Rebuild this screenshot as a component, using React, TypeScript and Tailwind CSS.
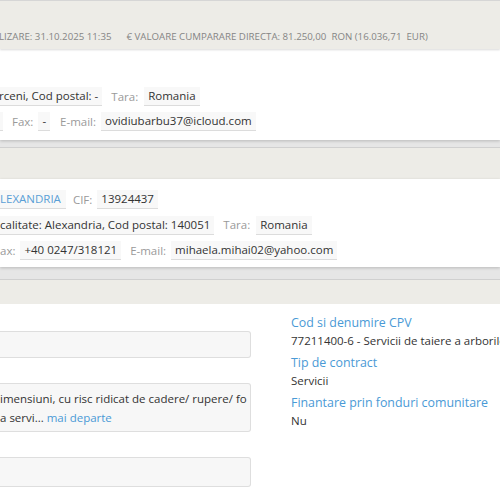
import React from "react";

const font = { fontFamily: '"Open Sans", "Noto Sans", sans-serif' };

function Label({ children, className = "" }: { children: React.ReactNode; className?: string }) {
  return <span className={`text-[#9a9a9a] text-[11.5px] leading-[18px] ${className}`}>{children}</span>;
}

function Val({
  children,
  className = "",
  link = false,
}: {
  children: React.ReactNode;
  className?: string;
  link?: boolean;
}) {
  return (
    <span
      className={`bg-[#f8f8f8] border-b border-[#dcdcdc] text-[11.5px] leading-[18px] whitespace-nowrap ${
        link ? "text-[#5a9fd6]" : "text-[#333]"
      } ${className}`}
    >
      {children}
    </span>
  );
}

export default function App() {
  return (
    <div className="w-[500px] h-[500px] overflow-hidden bg-[#e6e6e6]" style={font}>
      {/* Section 1 */}
      <div className="border-t border-[#d6d6d6] bg-[#edece7] h-[49px] flex items-end pb-[5px] shadow-[0_1px_2px_rgba(0,0,0,0.15)] relative z-10">
        <div className="flex text-[9.7px] leading-[14px] text-[#858585] uppercase whitespace-pre">
          <span className="-ml-[1px]">LIZARE: 31.10.2025 11:35</span>
          <span className="ml-[15px]">€ VALOARE CUMPARARE DIRECTA: 81.250,00  RON (16.036,71  EUR)</span>
        </div>
      </div>
      <div className="bg-white h-[91px] pt-[35px] shadow-[0_1px_3px_rgba(0,0,0,0.2)]">
        <div className="flex items-center h-[25px]">
          <Val className="pr-[4px] -ml-[1px]">rceni, Cod postal: -</Val>
          <Label className="ml-[9px]">Tara:</Label>
          <Val className="ml-[6px] px-[4px]">Romania</Val>
        </div>
        <div className="flex items-center h-[25px]">
          <Val className="w-[3px]">&nbsp;</Val>
          <Label className="ml-[9px]">Fax:</Label>
          <Val className="ml-[5px] px-[4px]">-</Val>
          <Label className="ml-[10px]">E-mail:</Label>
          <Val className="ml-[5px] px-[4px]">ovidiubarbu37@icloud.com</Val>
        </div>
      </div>

      {/* Section 2 */}
      <div className="mt-[7px] border-t border-[#d0d0d0] bg-[#edece7] h-[32px]" />
      <div className="bg-white h-[88px] pt-[8px] shadow-[0_1px_3px_rgba(0,0,0,0.2)]">
        <div className="flex items-center h-[25px]">
          <Val link className="pr-[5px]">LEXANDRIA</Val>
          <Label className="ml-[7px]">CIF:</Label>
          <Val className="ml-[5px] px-[4px]">13924437</Val>
        </div>
        <div className="flex items-center h-[26px]">
          <Val className="pr-[4px]">calitate: Alexandria, Cod postal: 140051</Val>
          <Label className="ml-[9px]">Tara:</Label>
          <Val className="ml-[6px] px-[4px]">Romania</Val>
        </div>
        <div className="flex items-center h-[25px]">
          <Label>ax:</Label>
          <Val className="ml-[5px] px-[4px]">+40 0247/318121</Val>
          <Label className="ml-[9px]">E-mail:</Label>
          <Val className="ml-[5px] px-[4px]">mihaela.mihai02@yahoo.com</Val>
        </div>
      </div>

      {/* Section 3 */}
      <div className="mt-[12px] border-t border-[#d0d0d0] bg-[#edece7] h-[25px]" />
      <div className="bg-white h-[200px] flex">
        <div className="w-[251px] shrink-0 pt-[27px]">
          <div className="h-[27px] bg-[#f7f7f7] border border-l-0 border-[#dedede] rounded-r-[3px]" />
          <div className="mt-[25px] h-[49px] bg-[#f7f7f7] border border-l-0 border-[#dedede] rounded-r-[3px] pt-[5px] text-[11.5px] leading-[19px] text-[#333] whitespace-nowrap overflow-hidden">
            <div>imensiuni, cu risc ridicat de cadere/ rupere/ fo</div>
            <div>
              a servi... <span className="text-[#4a9ad6]">mai departe</span>
            </div>
          </div>
          <div className="mt-[25px] h-[30px] bg-[#f7f7f7] border border-l-0 border-[#dedede] rounded-r-[3px]" />
        </div>
        <div className="ml-[40px] pt-[9px] whitespace-nowrap">
          <div className="text-[12.4px] leading-[19px] text-[#4a9ad6]">Cod si denumire CPV</div>
          <div className="text-[11.5px] leading-[17px] text-[#333]">77211400-6 - Servicii de taiere a arborilor</div>
          <div className="mt-[4px] text-[12.4px] leading-[19px] text-[#4a9ad6]">Tip de contract</div>
          <div className="text-[11.5px] leading-[17px] text-[#333]">Servicii</div>
          <div className="mt-[4px] text-[12.4px] leading-[19px] text-[#4a9ad6]">Finantare prin fonduri comunitare</div>
          <div className="text-[11.5px] leading-[17px] text-[#333]">Nu</div>
        </div>
      </div>
    </div>
  );
}
